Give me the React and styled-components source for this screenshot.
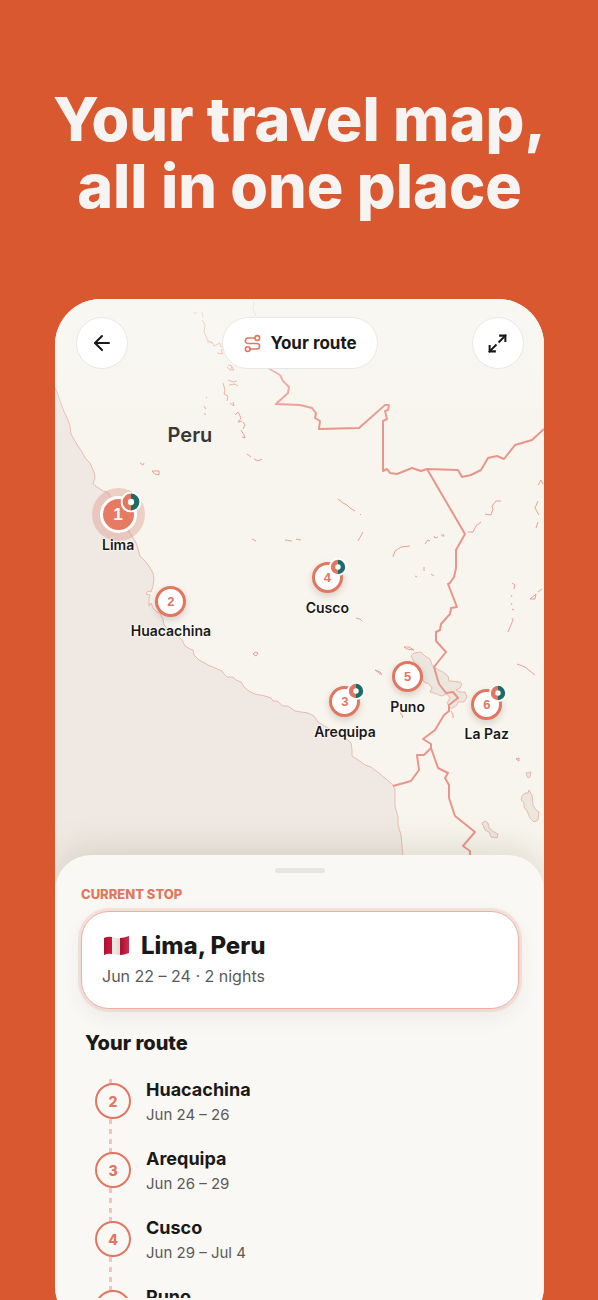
import React from "react";
import styled, { createGlobalStyle, css } from "styled-components";
import { ArrowLeft, Maximize2, Route } from "lucide-react";

const color = {
  brand: "#da582f",
  coral: "#e2765f",
  teal: "#1f6b66",
  ink: "#1a1918",
  muted: "#5c5a58",
  land: "#f8f5ee",
  sea: "#f0e9e3",
  sheet: "#f9f8f4",
};

const GlobalStyle = createGlobalStyle`
  *, *::before, *::after { box-sizing: border-box; }
  body {
    margin: 0;
    height: 100vh;
    overflow: hidden;
    background: ${color.brand};
    color: ${color.ink};
    font-family: Inter, "Liberation Sans", sans-serif;
  }
  h1, h2, h3, p, ol { margin: 0; padding: 0; }
`;

const Poster = styled.main`
  display: flex;
  flex-direction: column;
  height: calc(100vh + 32px);
  padding: 86px 54px 0 55px;
`;

const Headline = styled.h1`
  flex: none;
  margin: 0 -54px 79px;
  color: #f6f4f2;
  font-size: 61px;
  font-weight: 800;
  line-height: 67px;
  text-align: center;
`;

const Phone = styled.section`
  flex: 1;
  min-height: 0;
  display: flex;
  flex-direction: column;
  overflow: hidden;
  border-radius: 46px;
  background: ${color.sheet};
`;

const MapPanel = styled.div`
  position: relative;
  flex: none;
  aspect-ratio: 489 / 582;
  background: ${color.land};
`;

const MapArt = styled.svg`
  display: block;
  width: 100%;
  height: 100%;
`;

const Toolbar = styled.div`
  position: absolute;
  inset: 0 0 auto;
  display: flex;
  justify-content: space-between;
  padding: 18px 20px 0 21px;
`;

const surface = css`
  height: 52px;
  display: flex;
  align-items: center;
  justify-content: center;
  border: 1px solid #e9e7e3;
  border-radius: 26px;
  background: #fff;
  color: ${color.ink};
`;

const RoundButton = styled.button`
  ${surface}
  width: 52px;
  padding: 0;
`;

const RoutePill = styled.button`
  ${surface}
  gap: 8px;
  padding: 0 20px;
  font: 700 17px/24px Inter, sans-serif;
  svg { color: ${color.coral}; }
`;

const CountryLabel = styled.span`
  position: absolute;
  left: ${(p) => p.$x}%;
  top: ${(p) => p.$y}%;
  transform: translate(-50%, -50%);
  color: #393734;
  font-size: 20px;
  font-weight: 600;
  line-height: 24px;
`;

const Pin = styled.div`
  position: absolute;
  left: ${(p) => p.$x}%;
  top: ${(p) => p.$y}%;
  width: 0;
  height: 0;
  display: flex;
  align-items: center;
  justify-content: center;
`;

const PinDot = styled.span`
  flex: none;
  display: grid;
  place-items: center;
  width: ${(p) => (p.$active ? 37 : 31)}px;
  height: ${(p) => (p.$active ? 37 : 31)}px;
  border: 3px solid ${(p) => (p.$active ? "#fff" : color.coral)};
  border-radius: 50%;
  background: ${(p) => (p.$active ? "#e77a63" : "#fff")};
  color: ${(p) => (p.$active ? "#fff" : color.coral)};
  box-shadow: ${(p) =>
    p.$active ? "0 0 0 8px rgba(215, 130, 112, 0.32)" : "0 3px 7px rgba(60, 40, 30, 0.18)"};
  font: 700 ${(p) => (p.$active ? 17 : 13)}px/1 "Liberation Sans", sans-serif;
`;

const PinBadge = styled.svg`
  position: absolute;
  left: ${(p) => p.$offset}px;
  bottom: ${(p) => p.$offset}px;
  width: ${(p) => p.$size}px;
  height: ${(p) => p.$size}px;
  transform: translate(-50%, 50%);
`;

const PinLabel = styled.span`
  position: absolute;
  top: 20px;
  left: 0;
  transform: translateX(-50%);
  white-space: nowrap;
  font-size: 14px;
  font-weight: 600;
  line-height: 20px;
  text-shadow: 0 0 2px #fff, 0 0 2px #fff, 0 0 3px #fff;
`;

const Sheet = styled.div`
  position: relative;
  flex: 1;
  min-height: 0;
  display: flex;
  flex-direction: column;
  margin-top: -26px;
  padding: 13px 25px 34px 26px;
  border-radius: 36px 36px 0 0;
  background: ${color.sheet};
  box-shadow: 0 -8px 32px rgba(125, 120, 80, 0.2);
`;

const Handle = styled.div`
  flex: none;
  align-self: center;
  width: 50px;
  height: 5px;
  border-radius: 3px;
  background: #e7e6e3;
`;

const Eyebrow = styled.h2`
  flex: none;
  margin-top: 12px;
  color: ${color.coral};
  font-size: 13px;
  font-weight: 800;
  line-height: 18px;
  text-transform: uppercase;
`;

const StopCard = styled.article`
  flex: none;
  margin-top: 8px;
  height: 98px;
  padding: 19px 20px;
  border: 1px solid #efaea2;
  border-radius: 28px;
  background: #fff;
  box-shadow: 0 0 0 3px rgba(231, 122, 99, 0.17), 0 8px 22px rgba(60, 50, 70, 0.07);
`;

const StopTitle = styled.h3`
  display: flex;
  align-items: center;
  gap: 11px;
  font-size: 24px;
  font-weight: 800;
  line-height: 30px;
`;

const CardDates = styled.p`
  margin-top: 3px;
  color: ${color.muted};
  font-size: 16px;
  line-height: 24px;
`;

const RouteHeading = styled.h2`
  flex: none;
  margin: 21px 0 0 4px;
  font-size: 20px;
  font-weight: 800;
  line-height: 26px;
`;

const StopList = styled.ol`
  flex: 1;
  min-height: 0;
  overflow: hidden;
  margin: 23px 0 0 14px;
  list-style: none;
`;

const StopRow = styled.li`
  display: flex;
  gap: 15px;
  height: 69px;
  background: repeating-linear-gradient(#f2c3ba 0 5px, transparent 5px 10px) 14px 0 / 3px 100% no-repeat;
`;

const StopNumber = styled.span`
  flex: none;
  display: grid;
  place-items: center;
  width: 36px;
  height: 36px;
  margin-top: 4px;
  border: 2px solid ${color.coral};
  border-radius: 50%;
  background: ${color.sheet};
  color: ${color.coral};
  font-size: 14px;
  font-weight: 800;
`;

const StopName = styled.h3`
  font-size: 18px;
  font-weight: 700;
  line-height: 22px;
`;

const StopDates = styled.p`
  margin-top: 2px;
  color: ${color.muted};
  font-size: 15px;
  line-height: 24px;
`;

// Positions are percentages of the map panel.
const pins = [
  { n: 1, name: "Lima", x: 12.9, y: 37.1, budget: true, active: true },
  { n: 2, name: "Huacachina", x: 23.7, y: 51.9 },
  { n: 3, name: "Arequipa", x: 59.3, y: 69.2, budget: true },
  { n: 4, name: "Cusco", x: 55.7, y: 47.9, budget: true },
  { n: 5, name: "Puno", x: 72.1, y: 64.9 },
  { n: 6, name: "La Paz", x: 88.3, y: 69.6, budget: true },
];

const stops = [
  { n: 2, name: "Huacachina", dates: "Jun 24 – 26" },
  { n: 3, name: "Arequipa", dates: "Jun 26 – 29" },
  { n: 4, name: "Cusco", dates: "Jun 29 – Jul 4" },
  { n: 5, name: "Puno", dates: "Jul 4 – 6" },
];

const coast =
  "M55 388 L57 392 61 404 65 414 68 420 70 426 71 434 75 441 78 446 82 452 86 459 90 463 94 472 95 478 93 484 97 487 103 491 107 492 109 494 112 499 120 515 130 533 135 541 137 545 140 556 145 561 149 566 153 573 154 579 153 586 151 592 148 591 146 594 150 595 149 599 149 606 151 603 153 608 157 612 160 613 163 619 164 625 170 631 178 636 182 640 185 646 190 649 193 650 194 655 199 660 208 665 222 671 224 674 227 677 233 677 236 680 241 682 244 687 249 691 255 694 265 696 271 698 273 701 277 701 283 706 288 706 295 711 301 712 308 713 314 716 318 722 326 727 345 737 351 743 352 749 352 756 361 762 365 765 371 767 380 774 386 779 393 785 395 790 395 806 398 817 398 825 401 835 402 846 403 856 403 882";

const titicaca =
  "M411 656 L414 653 421 652 425 656 430 659 432 665 437 669 443 672 448 676 449 681 460 682 462 684 460 688 456 690 460 692 465 692 467 697 464 702 458 702 457 705 453 708 450 708 447 703 450 698 447 694 441 696 437 694 430 692 432 688 429 684 424 682 419 672 Z";

const lakes = [
  titicaca,
  "M522 796 L525 793 528 793 529 790 532 795 533 805 536 810 539 812 538 820 534 822 530 818 527 811 524 807 524 803 521 800 Z",
  "M482 823 L485 821 488 823 489 828 494 832 498 834 497 838 491 837 489 832 485 830 Z",
  "M526 773 L531 772 530 777 528 778 Z",
];

const ridges =
  "M193 313 h4 M202 312 l1 5 M202 320 l3 5 -1 7 4 9 5 2 M207 342 l5 0 2 4 6 -3 1 4 6 1 -6 2 2 4 -6 -1 M228 365 l4 1 -1 3 M227 367 l3 3 4 0 -2 -3 M228 380 l5 2 4 -1 M229 385 l6 -1 3 2 M223 383 l2 7 -1 4 4 2 -1 5 M230 403 l4 3 -1 -4 M235 415 l3 -3 3 6 -3 4 4 -1 M243 422 l2 3 -2 4 M241 430 l3 5 1 3 -3 -1 M206 397 l1 1 M204 406 l2 3 M204 414 h2 M247 454 l4 3 M254 459 l4 2 4 -2 M140 463 l3 2 1 -2 M152 471 h7 v4 l-4 -1 z M252 539 l4 2 M285 540 l7 1 M296 539 l5 1 M338 499 l5 4 4 2 3 3 5 3 M360 514 l1 1 M363 532 l-5 9 M393 557 l2 -6 6 -4 9 -1 M425 544 l3 -4 2 1 M434 536 l1 2 3 -1 M441 535 l3 0 -1 2 M468 532 l5 0 3 -6 5 -4 M485 514 l6 1 2 -6 -1 -3 4 -5 5 0 M538 485 l3 -5 2 4 M538 501 l-3 7 4 7 M538 522 l-2 6 M415 576 l2 1 M424 567 l0 4 M431 574 l3 2 M512 583 l3 2 -1 4 M511 595 l1 2 M511 603 l1 2 M512 609 l2 1 M508 632 l5 -12 -1 -2 M530 599 l6 -5 -1 5 z M538 592 l4 -3 M356 618 l4 1 2 2 M404 647 l5 0 5 3 -7 -1 z M375 670 l5 2 2 3 z M400 713 l2 2 1 3 M517 664 l8 3 10 8 M516 759 l3 -1 0 3 z M253 654 l2 -2 3 1 -2 3 z M451 711 l2 4 0 3";

function RouteMap() {
  return (
    <MapArt viewBox="55 299 489 582" preserveAspectRatio="xMidYMin slice" aria-hidden="true">
      <defs>
        <linearGradient id="topFade" x1="0" y1="0" x2="0" y2="1">
          <stop offset="0" stopColor="#f8f8f5" stopOpacity="0.75" />
          <stop offset="0.45" stopColor="#f8f8f5" stopOpacity="0.4" />
          <stop offset="1" stopColor="#f8f8f5" stopOpacity="0" />
        </linearGradient>
      </defs>
      <path d={`${coast} L55 882 Z`} fill={color.sea} />
      <path d={coast} fill="none" stroke="#e9aca0" strokeWidth="0.8" />
      {lakes.map((d) => (
        <path key={d} d={d} fill="#ebe6de" stroke="#ecaba0" strokeWidth="0.8" />
      ))}
      <path d={ridges} fill="none" stroke="#e8968a" strokeWidth="0.9" />
      <path d="M254 302 L253 309 256 316" fill="none" stroke="#e9a194" strokeWidth="0.9" />
      <g fill="none" stroke="#e9958a" strokeWidth="2" strokeLinejoin="round">
        <path d="M268 368 L280 375 283 381 289 387 288 393 276 404 300 405 312 408 316 413 315 418 320 421 319 429 359 428 385 405 389 405 388 410 385 411 387 419 383 421 383 471 387 469 390 473 397 474 412 468 421 471 427 469 458 470 462 477 471 475 481 470 488 458 497 456 504 459 515 445 532 440 544 429" />
        <path d="M427 469 L465 534 456 550 456 568 454 577 450 583 448 584 457 607 451 608 450 614 441 624 440 630 436 632 436 641 446 652 434 667 439 684 446 693 453 692 458 698 449 705 449 711 444 715 435 730 423 739 431 744 431 748 438 768 448 773 445 778 449 785 449 798 455 816 475 832 463 846 470 851 470 858" />
        <path d="M431 748 L424 755 417 755 419 770 411 781 393 786" />
      </g>
      <rect x="55" y="299" width="489" height="130" fill="url(#topFade)" />
    </MapArt>
  );
}

function Badge({ active }) {
  return (
    <PinBadge $offset={active ? 13 : 11} $size={active ? 21 : 18} viewBox="0 0 20 20" aria-hidden="true">
      <circle cx="10" cy="10" r="10" fill="#fff" />
      <path d="M10 2 a8 8 0 0 0 0 16 z" fill="#e2765f" />
      <path d="M10 2 a8 8 0 0 1 0 16 z" fill={color.teal} />
      <circle cx="10" cy="10" r="3" fill="#fff" />
    </PinBadge>
  );
}

function PeruFlag() {
  return (
    <svg width="28" height="22" viewBox="0 0 28 22" role="img" aria-label="Flag of Peru">
      <defs>
        <linearGradient id="cloth" x1="0" x2="1">
          <stop offset="0" stopColor="#000" stopOpacity="0.16" />
          <stop offset="0.2" stopColor="#000" stopOpacity="0" />
          <stop offset="0.5" stopColor="#000" stopOpacity="0.05" />
          <stop offset="0.72" stopColor="#000" stopOpacity="0.14" />
          <stop offset="1" stopColor="#fff" stopOpacity="0.1" />
        </linearGradient>
      </defs>
      <path d="M2 3 Q6 1 10 2 V19 Q6 18 2 20 Z" fill="#c9163a" />
      <path d="M10 2 Q14 3.500 18 3 V20 Q14 20 10 19 Z" fill="#f5f1ea" />
      <path d="M18 3 Q22 3 27 1 V18 Q22 20 18 20 Z" fill="#c9163a" />
      <path d="M2 3 Q6 1 10 2 Q14 3.500 18 3 Q22 3 27 1 V18 Q22 20 18 20 Q14 20 10 19 Q6 18 2 20 Z" fill="url(#cloth)" />
    </svg>
  );
}

export default function App() {
  return (
    <>
      <GlobalStyle />
      <Poster>
        <Headline>
          Your travel map,
          <br />
          all in one place
        </Headline>
        <Phone>
          <MapPanel>
            <RouteMap />
            <CountryLabel $x={27.6} $y={23.4}>Peru</CountryLabel>
            {pins.map((pin) => (
              <Pin key={pin.n} $x={pin.x} $y={pin.y}>
                <PinDot $active={pin.active}>{pin.n}</PinDot>
                {pin.budget && <Badge active={pin.active} />}
                <PinLabel>{pin.name}</PinLabel>
              </Pin>
            ))}
            <Toolbar>
              <RoundButton type="button" aria-label="Back">
                <ArrowLeft size={24} />
              </RoundButton>
              <RoutePill type="button">
                <Route size={19} />
                Your route
              </RoutePill>
              <RoundButton type="button" aria-label="Expand map">
                <Maximize2 size={21} strokeWidth={2.3} strokeLinecap="square" strokeLinejoin="miter" />
              </RoundButton>
            </Toolbar>
          </MapPanel>
          <Sheet>
            <Handle />
            <Eyebrow>Current stop</Eyebrow>
            <StopCard>
              <StopTitle>
                <PeruFlag />
                Lima, Peru
              </StopTitle>
              <CardDates>Jun 22 – 24 · 2 nights</CardDates>
            </StopCard>
            <RouteHeading>Your route</RouteHeading>
            <StopList>
              {stops.map((stop) => (
                <StopRow key={stop.n}>
                  <StopNumber>{stop.n}</StopNumber>
                  <div>
                    <StopName>{stop.name}</StopName>
                    <StopDates>{stop.dates}</StopDates>
                  </div>
                </StopRow>
              ))}
            </StopList>
          </Sheet>
        </Phone>
      </Poster>
    </>
  );
}
